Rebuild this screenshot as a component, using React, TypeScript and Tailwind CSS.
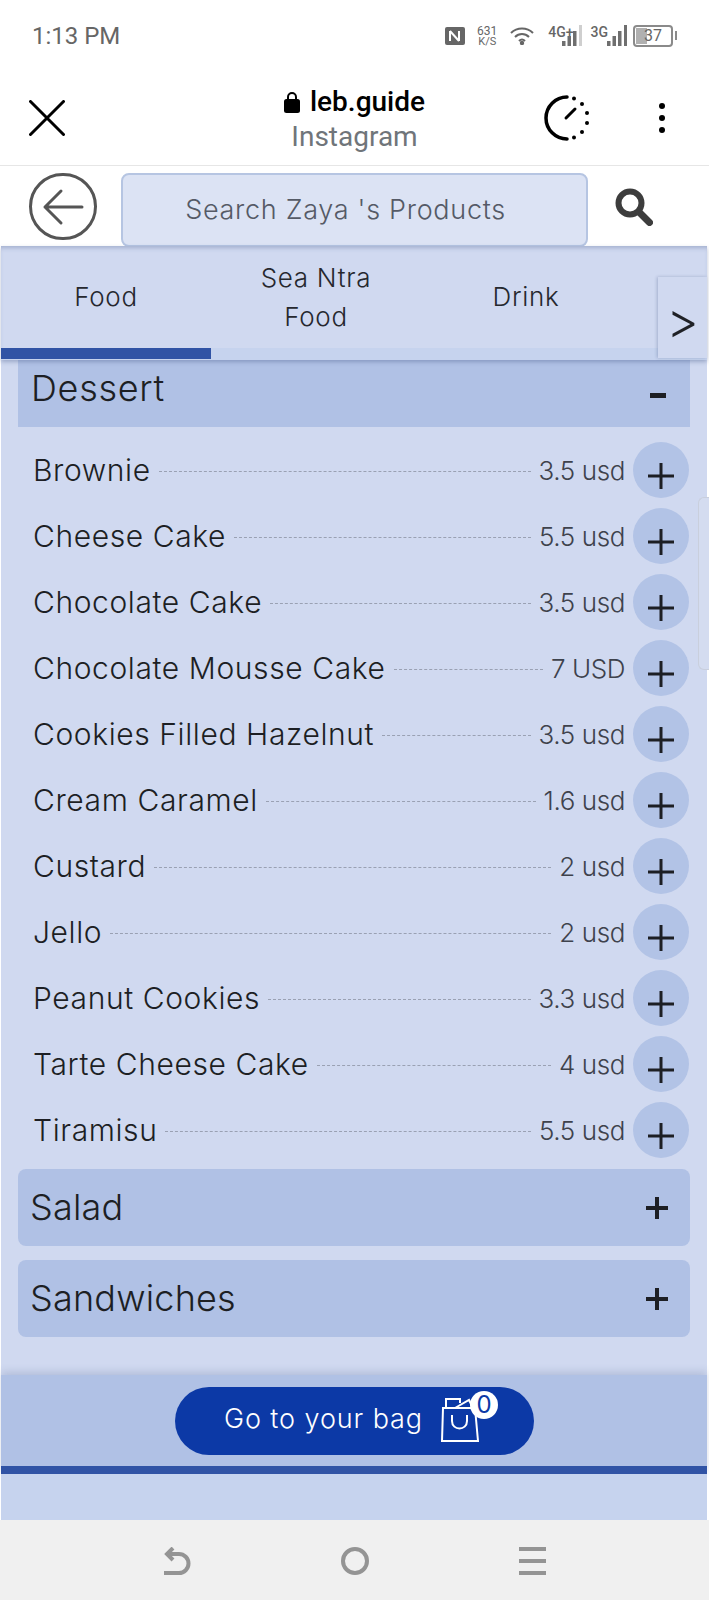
const items = [
  ["Brownie", "3.5 usd"],
  ["Cheese Cake", "5.5 usd"],
  ["Chocolate Cake", "3.5 usd"],
  ["Chocolate Mousse Cake", "7 USD"],
  ["Cookies Filled Hazelnut", "3.5 usd"],
  ["Cream Caramel", "1.6 usd"],
  ["Custard", "2 usd"],
  ["Jello", "2 usd"],
  ["Peanut Cookies", "3.3 usd"],
  ["Tarte Cheese Cake", "4 usd"],
  ["Tiramisu", "5.5 usd"],
];

const Bars = ({ dim = false }: { dim?: boolean }) => (
  <svg width="20" height="21" viewBox="0 0 20 21" fill="#6f6f6f">
    <rect x="0" y="16" width="3.5" height="5" />
    <rect x="5.5" y="11" width="3.5" height="10" />
    <rect x="11" y="6" width="3.5" height="15" />
    <rect x="17" y="0" width="3" height="21" fill={dim ? "#cfcfcf" : "#6f6f6f"} />
  </svg>
);

const StatusBar = () => (
  <div className="h-[70px] flex items-center justify-between pl-[32px] pr-[32px] pt-[1px] font-['Roboto',sans-serif] text-[#666666]">
    <span className="text-[24px] leading-none mt-[1px]">1:13 PM</span>
    <div className="flex items-center">
      <svg width="20" height="18" viewBox="0 0 20 18">
        <rect width="20" height="18" rx="2" fill="#666666" />
        <path d="M5 4v10M5 4l9 10M14 4v10" stroke="#ffffff" strokeWidth="2" fill="none" />
      </svg>
      <div className="ml-[11px] w-[22px] flex flex-col items-center text-[12px] leading-[12px]">
        <span>631</span>
        <span className="text-[11px] leading-[10px]">K/S</span>
      </div>
      <svg className="ml-[12px]" width="24" height="18" viewBox="0 0 24 18" fill="none" stroke="#666666" strokeWidth="2">
        <path d="M1 6c6-6 16-6 22 0" />
        <path d="M5 10c4-4 10-4 14 0" />
        <path d="M9 14c2-2 4-2 6 0" />
        <circle cx="12" cy="16" r="1.2" fill="#666666" />
      </svg>
      <div className="ml-[14px] flex items-start">
        <span className="text-[14px] leading-none font-medium">4G+</span>
        <span className="-ml-[12px]"><Bars dim /></span>
      </div>
      <div className="ml-[9px] flex items-start">
        <span className="text-[14px] leading-none font-medium">3G</span>
        <span className="-ml-[1px]"><Bars /></span>
      </div>
      <div className="ml-[6px] flex items-center">
        <div className="relative w-[40px] h-[22px] border-2 border-[#8a8a8a] rounded-[4px] flex items-center justify-center">
          <div className="absolute left-[1px] top-[1px] bottom-[1px] w-[11px] bg-[#b0b0b0]" />
          <span className="relative text-[16px] leading-none">37</span>
        </div>
        <div className="ml-[2px] w-[2px] h-[9px] bg-[#8a8a8a]" />
      </div>
    </div>
  </div>
);

const BrowserBar = () => (
  <div className="h-[96px] border-b border-[#e6e6e6] flex items-center justify-between pl-[29px] pr-[44px] font-['Roboto',sans-serif]">
    <svg width="36" height="36" viewBox="0 0 36 36" stroke="#000000" strokeWidth="3" strokeLinecap="round">
      <path d="M1.5 1.5l33 33M34.5 1.5l-33 33" />
    </svg>
    <div className="flex flex-col items-center ml-[100px] mt-[3px]">
      <div className="flex items-center gap-[10px] h-[36px]">
        <svg width="16" height="22" viewBox="0 0 16 22">
          <rect y="8" width="16" height="14" rx="2.5" fill="#000000" />
          <path d="M4 9V6a4 4 0 018 0v3" fill="none" stroke="#000000" strokeWidth="2" />
        </svg>
        <span className="text-[28px] leading-none font-medium text-black">leb.guide</span>
      </div>
      <span className="text-[28px] leading-[34px] text-[#70757a]">Instagram</span>
    </div>
    <div className="flex items-center gap-[69px]">
      <svg width="46" height="46" viewBox="0 0 46 46" fill="none" stroke="#000000">
        <path d="M23 2a21 21 0 000 42" strokeWidth="3.5" strokeLinecap="round" />
        <path d="M22 23l9-9" strokeWidth="3" strokeLinecap="round" />
        <g fill="#000000" stroke="none">
          <circle cx="30" cy="3.5" r="2" />
          <circle cx="38" cy="9" r="2" />
          <circle cx="43" cy="18" r="2" />
          <circle cx="43" cy="28" r="2" />
          <circle cx="38" cy="37" r="2" />
          <circle cx="30" cy="42.5" r="2" />
        </g>
      </svg>
      <div className="flex flex-col gap-[6px]">
        <div className="w-[6px] h-[6px] rounded-full bg-black" />
        <div className="w-[6px] h-[6px] rounded-full bg-black" />
        <div className="w-[6px] h-[6px] rounded-full bg-black" />
      </div>
    </div>
  </div>
);

const SearchRow = () => (
  <div className="h-[80px] flex items-start pl-[29px] pt-[7px]">
    <div className="w-[68px] h-[67px] rounded-full border-[3px] border-[#555555] flex items-center justify-center">
      <svg width="44" height="44" viewBox="0 0 44 44" fill="none" stroke="#555555" strokeWidth="3" strokeLinecap="round" strokeLinejoin="round">
        <path d="M41 22H4M20 6L4 22l16 16" />
      </svg>
    </div>
    <div className="ml-[24px] w-[467px] h-[74px] rounded-[8px] border-2 border-[#b6c5e2] bg-[#dce3f4] flex items-center justify-center pr-[18px] text-[27px] font-light text-[#555a66] tracking-[0.7px]">
      Search Zaya 's Products
    </div>
    <svg className="ml-[27px] mt-[15px]" width="38" height="38" viewBox="0 0 38 38" fill="none" stroke="#3d3d3d" strokeLinecap="round">
      <circle cx="15" cy="15" r="11.5" strokeWidth="6" />
      <path d="M24 24l10.5 10.5" strokeWidth="7" />
    </svg>
  </div>
);

const Tabs = () => (
  <div className="relative h-[114px] bg-[#d0d9f0] shadow-[0_2px_4px_rgba(60,80,130,0.35),inset_0_4px_4px_-2px_rgba(60,80,130,0.3)] z-10">
    <div className="h-[101px] flex text-[26px] font-light leading-[39px] text-[#26282e] tracking-[0.7px]">
      <div className="w-[210px] flex items-center justify-center text-center">Food</div>
      <div className="w-[210px] flex items-center justify-center text-center">
        Sea Ntra
        <br />
        Food
      </div>
      <div className="w-[210px] flex items-center justify-center text-center">Drink</div>
    </div>
    <div className="mt-[1px] h-[12px] bg-[#c6d3ee]">
      <div className="w-[210px] h-[11px] bg-[#3053a5]" />
    </div>
    <div className="absolute right-0 top-[31px] w-[49px] h-[81px] bg-[#d0d9f0] shadow-[-1px_0_3px_rgba(60,80,130,0.3)] flex items-center justify-center pt-[4px] text-[50px] font-light leading-none text-[#1f2126]">
      &gt;
    </div>
  </div>
);

const ItemRow = ({ name, price }: { name: string; price: string }) => (
  <div className="h-[66px] flex items-start pl-[32px] pr-[18px]">
    <div className="h-[56px] flex-1 flex items-center min-w-0">
      <span className="text-[30px] font-light text-[#1d1f24] tracking-[0.6px] whitespace-nowrap">{name}</span>
      <div className="flex-1 mx-[8px] mt-[3px] border-t border-dashed border-[#9aa1b3]" />
      <span className="text-[26px] font-light text-[#3e424c] tracking-[-0.4px] whitespace-nowrap">{price}</span>
    </div>
    <button className="ml-[8px] w-[56px] h-[56px] rounded-full bg-[#b2c3e6] flex items-center justify-center">
      <svg className="mt-[12px]" width="26" height="26" viewBox="0 0 26 26" stroke="#1d1f24" strokeWidth="3">
        <path d="M0 13h26M13 0v26" />
      </svg>
    </button>
  </div>
);

const CategoryBar = ({ title }: { title: string }) => (
  <div className="mx-[17px] h-[77px] rounded-[8px] bg-[#b0c1e5] flex items-center justify-between pl-[12px] pr-[22px]">
    <span className="text-[36px] font-light text-[#1d1f24] tracking-[0.2px] -mt-[1px]">{title}</span>
    <svg width="22" height="22" viewBox="0 0 22 22" stroke="#1d1f24" strokeWidth="4">
      <path d="M0 11h22M11 0v22" />
    </svg>
  </div>
);

const Footer = () => (
  <div className="mt-[38px] h-[99px] bg-[#b0c1e5] shadow-[0_-3px_8px_rgba(60,80,130,0.2)]">
    <div className="h-[91px] pt-[12px] flex justify-center">
      <button className="w-[359px] h-[68px] rounded-full bg-[#0c39a6] flex items-center justify-center pr-[5px] text-white">
        <span className="text-[27px] font-light tracking-[0.9px] -mt-[3px]">Go to your bag</span>
        <div className="relative ml-[18px] w-[38px] h-[44px] -mt-[2px]">
          <svg width="38" height="44" viewBox="0 0 38 44" fill="none" stroke="#ffffff" strokeWidth="2">
            <path d="M2 10L1 43h36l-3-33z" />
            <path d="M5 10V1h14v4M14 10l14-8 4 8" />
            <path d="M11 17v6c0 10 15 10 15 0v-6" />
          </svg>
          <div className="absolute -top-[7px] left-[29px] w-[28px] h-[28px] rounded-full bg-white flex items-center justify-center text-[24px] leading-none text-[#0c39a6]">
            0
          </div>
        </div>
      </button>
    </div>
    <div className="h-[8px] bg-[#3053a5]" />
  </div>
);

const NavBar = () => (
  <div className="h-[80px] bg-[#f0f0f0] flex items-start justify-center gap-[150px] pt-[27px]">
    <svg width="28" height="28" viewBox="0 0 28 28" fill="none" stroke="#949494" strokeWidth="4">
      <path d="M1 26h15a9.5 9.5 0 000-19H4" />
      <path d="M10 1L4 7l6 6" />
    </svg>
    <svg width="28" height="28" viewBox="0 0 28 28" fill="none" stroke="#949494" strokeWidth="4">
      <ellipse cx="14" cy="14" rx="12" ry="12" />
    </svg>
    <div className="w-[27px] h-[28px] flex flex-col justify-between">
      <div className="h-[4px] bg-[#949494]" />
      <div className="h-[4px] bg-[#949494]" />
      <div className="h-[4px] bg-[#949494]" />
    </div>
  </div>
);

export default function App() {
  return (
    <div className="relative w-[709px] h-[1600px] overflow-hidden bg-white font-['Inter',sans-serif]">
      <StatusBar />
      <BrowserBar />
      <SearchRow />
      <main className="ml-[1px] mr-[2px] h-[1274px] bg-[#d0d9f0] flex flex-col">
        <Tabs />
        <div className="mx-[17px] h-[67px] bg-[#b0c1e5] flex items-center justify-between pl-[13px] pr-[24px] shrink-0">
          <span className="text-[36px] font-light text-[#1d1f24] tracking-[0.7px] -mt-[12px]">Dessert</span>
          <div className="w-[16px] h-[5px] mt-[3px] bg-[#1d1f24]" />
        </div>
        <div className="pt-[15px] pb-[1px]">
          {items.map(([name, price]) => (
            <ItemRow key={name} name={name} price={price} />
          ))}
        </div>
        <div className="flex flex-col gap-[14px]">
          <CategoryBar title="Salad" />
          <CategoryBar title="Sandwiches" />
        </div>
        <Footer />
        <div className="flex-1 bg-[#c6d3ee]" />
      </main>
      <NavBar />
      <div className="absolute right-0 top-[497px] w-[11px] h-[173px] rounded-l-[6px] border border-r-0 border-[#c9cfdd] bg-[#d4dcf0]" />
    </div>
  );
}
